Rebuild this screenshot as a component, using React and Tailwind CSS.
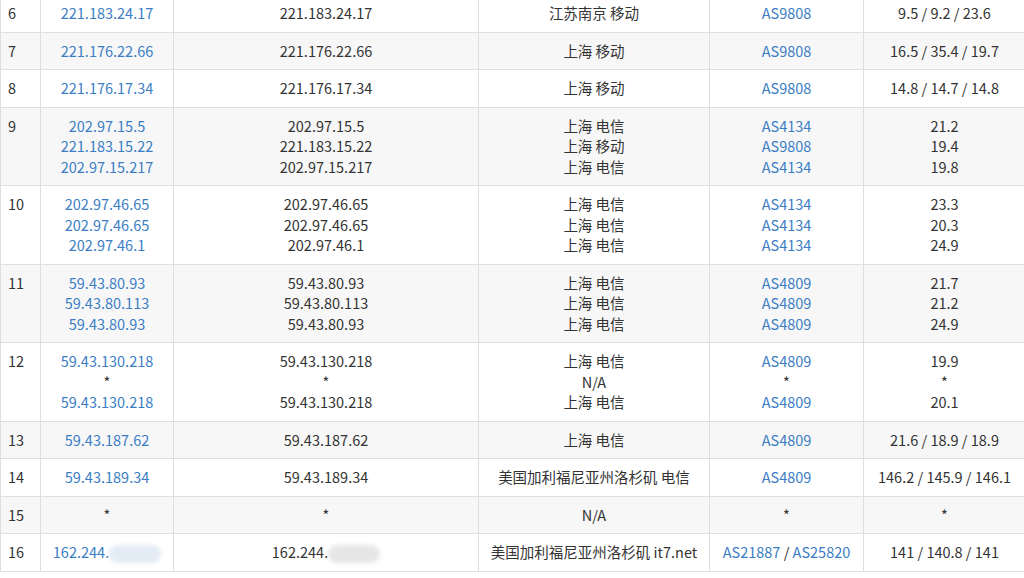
import React from 'react';

const rows = [
  { n: 6, ips: ['221.183.24.17'], loc: ['江苏南京 移动'], as: [['AS9808']], t: ['9.5 / 9.2 / 23.6'] },
  { n: 7, ips: ['221.176.22.66'], loc: ['上海 移动'], as: [['AS9808']], t: ['16.5 / 35.4 / 19.7'] },
  { n: 8, ips: ['221.176.17.34'], loc: ['上海 移动'], as: [['AS9808']], t: ['14.8 / 14.7 / 14.8'] },
  { n: 9, ips: ['202.97.15.5', '221.183.15.22', '202.97.15.217'], loc: ['上海 电信', '上海 移动', '上海 电信'], as: [['AS4134'], ['AS9808'], ['AS4134']], t: ['21.2', '19.4', '19.8'] },
  { n: 10, ips: ['202.97.46.65', '202.97.46.65', '202.97.46.1'], loc: ['上海 电信', '上海 电信', '上海 电信'], as: [['AS4134'], ['AS4134'], ['AS4134']], t: ['23.3', '20.3', '24.9'] },
  { n: 11, ips: ['59.43.80.93', '59.43.80.113', '59.43.80.93'], loc: ['上海 电信', '上海 电信', '上海 电信'], as: [['AS4809'], ['AS4809'], ['AS4809']], t: ['21.7', '21.2', '24.9'] },
  { n: 12, ips: ['59.43.130.218', '*', '59.43.130.218'], loc: ['上海 电信', 'N/A', '上海 电信'], as: [['AS4809'], null, ['AS4809']], t: ['19.9', '*', '20.1'] },
  { n: 13, ips: ['59.43.187.62'], loc: ['上海 电信'], as: [['AS4809']], t: ['21.6 / 18.9 / 18.9'] },
  { n: 14, ips: ['59.43.189.34'], loc: ['美国加利福尼亚州洛杉矶 电信'], as: [['AS4809']], t: ['146.2 / 145.9 / 146.1'] },
  { n: 15, ips: ['*'], loc: ['N/A'], as: [null], t: ['*'] },
  { n: 16, ips: ['162.244.'], blur: true, loc: ['美国加利福尼亚州洛杉矶 it7.net'], as: [['AS21887', 'AS25820']], t: ['141 / 140.8 / 141'] },
];

const link = 'text-[#3b7dc4]';

const Blur = ({ c }) => (
  <span className={`inline-block w-[52px] h-[18px] align-middle rounded-full blur-[2px] ${c}`} />
);

export default function App() {
  return (
    <div className="w-[1024px] h-[578px] overflow-hidden bg-white" style={{ fontFamily: '"Noto Sans CJK SC", "Noto Sans", sans-serif' }}>
      <table className="-mt-[6px] w-[1025px] border-collapse text-[14.5px] leading-[20.5px] text-[#333] table-fixed whitespace-nowrap">
        <colgroup>
          <col className="w-[40px]" />
          <col className="w-[133px]" />
          <col className="w-[305px]" />
          <col className="w-[231px]" />
          <col className="w-[154px]" />
          <col className="w-[162px]" />
        </colgroup>
        <tbody>
          {rows.map((r) => (
            <tr key={r.n} className={r.n % 2 ? 'bg-[#f7f7f7]' : 'bg-white'}>
              <td className="border border-[#dedede] pl-[7px] py-[8px] align-top">{r.n}</td>
              <td className={`border border-[#dedede] text-center py-[8px] ${link}`}>
                {r.ips.map((ip, i) => (
                  <div key={i} className={ip === '*' ? 'text-[#333]' : ''}>{ip}{r.blur && <Blur c="bg-[#e3ebf5]" />}</div>
                ))}
              </td>
              <td className="border border-[#dedede] text-center py-[8px]">
                {r.ips.map((ip, i) => (
                  <div key={i}>{ip}{r.blur && <Blur c="bg-[#e6e6e6]" />}</div>
                ))}
              </td>
              <td className="border border-[#dedede] text-center py-[8px]">
                {r.loc.map((l, i) => <div key={i}>{l}</div>)}
              </td>
              <td className="border border-[#dedede] text-center py-[8px]">
                {r.as.map((a, i) => (
                  <div key={i}>
                    {a ? a.map((x, j) => (
                      <span key={j}>{j > 0 && <span> / </span>}<span className={link}>{x}</span></span>
                    )) : '*'}
                  </div>
                ))}
              </td>
              <td className="border border-[#dedede] text-center py-[8px]">
                {r.t.map((x, i) => <div key={i}>{x}</div>)}
              </td>
            </tr>
          ))}
        </tbody>
      </table>
    </div>
  );
}
